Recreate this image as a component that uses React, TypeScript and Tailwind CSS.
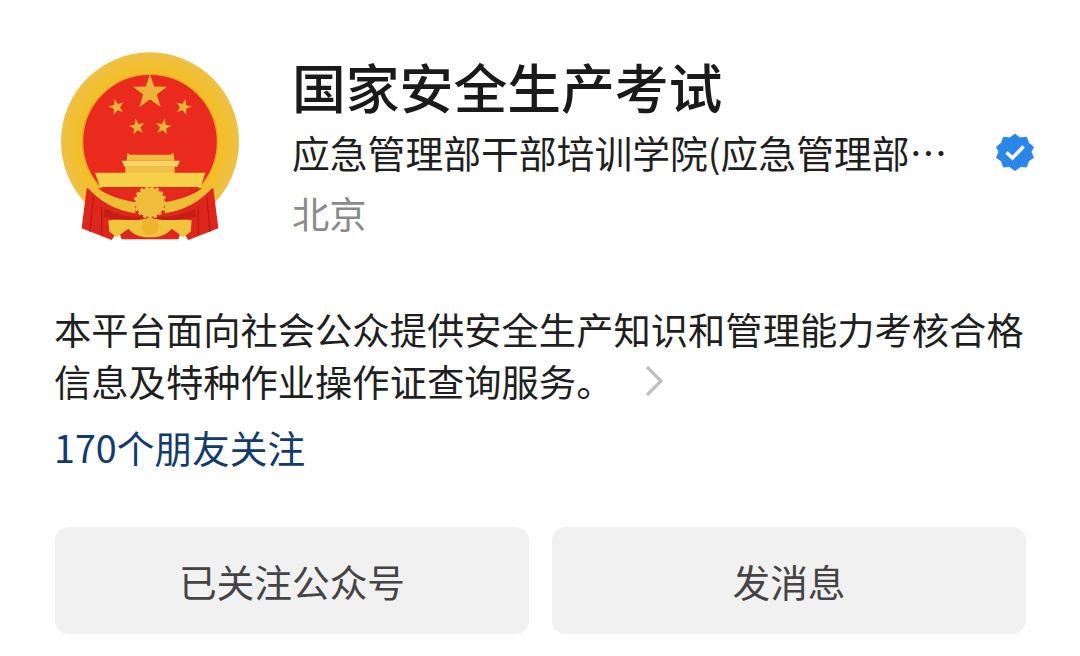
const star = (cx: number, cy: number, R: number, rot = 0) => {
  const pts: string[] = [];
  for (let i = 0; i < 10; i++) {
    const r = i % 2 === 0 ? R : R * 0.4;
    const a = ((-90 + i * 36 + rot) * Math.PI) / 180;
    pts.push(`${(cx + r * Math.cos(a)).toFixed(1)},${(cy + r * Math.sin(a)).toFixed(1)}`);
  }
  return pts.join(" ");
};

function Emblem() {
  return (
    <svg width="190" height="200" viewBox="45 24 570 600" className="shrink-0">
      <defs>
        <filter id="soft"><feGaussianBlur stdDeviation="2.2" /></filter>
        <radialGradient id="ring" cx="50%" cy="50%" r="50%">
          <stop offset="80%" stopColor="#f3bf28" />
          <stop offset="100%" stopColor="#eec046" />
        </radialGradient>
      </defs>
      <g filter="url(#soft)">
        <ellipse cx="330" cy="305" rx="267" ry="268" fill="url(#ring)" />
        <circle cx="330" cy="305" r="202" fill="#ea2c1c" stroke="#dca02e" strokeWidth="4" />
        <polygon points={star(330, 157, 54)} fill="#eeb23a" />
        <polygon points={star(230, 201, 25, -15)} fill="#eeb23a" />
        <polygon points={star(430, 201, 25, 15)} fill="#eeb23a" />
        <polygon points={star(291, 261, 25, -10)} fill="#eeb23a" />
        <polygon points={star(370, 261, 25, 10)} fill="#eeb23a" />
        <path d="M262 338 L270 344 H392 L400 338 L404 362 H260 Z" fill="#f0bc40" />
        <path d="M245 362 H420 L412 380 H253 Z" fill="#f6d466" />
        <path d="M256 380 H404 V400 H256 Z" fill="#f0c244" />
        <path d="M165 398 H496 L482 441 H180 Z" fill="#f6d048" />
        <path d="M140 445 L125 565 L215 600 L235 570 L245 598 L415 598 L425 570 L445 600 L535 565 L520 445 Z" fill="#de261a" />
        <path d="M160 470 L150 575 M185 500 L185 585 M500 470 L510 575 M475 500 L475 585" stroke="#b91c12" strokeWidth="4" fill="none" />
        <path d="M195 505 C240 530 285 535 330 525 C375 535 420 530 465 505 L470 530 C420 545 370 540 330 540 C290 540 240 545 190 530 Z" fill="#c81e14" />
        <path d="M198 442 H462 L440 462 C420 478 400 485 330 490 C260 485 240 478 220 462 Z" fill="#e42a1b" />
        <path d="M136 436 C180 488 230 512 286 520 L286 487 C240 478 195 465 166 438 Z" fill="#eebc36" />
        <path d="M524 436 C480 488 430 512 374 520 L374 487 C420 478 465 465 494 438 Z" fill="#eebc36" />
        <circle cx="330" cy="487" r="44" fill="#efbd3a" stroke="#efbd3a" strokeWidth="10" strokeDasharray="9 7" />
        <path d="M300 510 H360 L350 525 H310 Z" fill="#efbd3a" />
        <path d="M205 541 C250 535 290 548 330 532 C370 548 410 535 455 541 L452 575 L430 592 L395 566 C375 590 350 592 330 592 C310 592 285 590 265 566 L230 592 L208 575 Z" fill="#f2c43e" />
        <circle cx="330" cy="560" r="26" fill="#eeb42e" />
      </g>
    </svg>
  );
}

function Badge() {
  return (
    <svg width="38" height="38" viewBox="0 0 38 38" className="shrink-0">
      <path
        d="M19 1 L24 5 L30.5 4.2 L32.5 10 L37.5 14 L35 19 L37.5 24.5 L32.5 28 L30.5 34 L24.5 33.5 L19 37.5 L13.5 33.5 L7.5 34 L5.5 28 L0.5 24.5 L3 19 L0.5 14 L5.5 10 L7.5 4.2 L14 5 Z"
        fill="#2a86e8"
        stroke="#2a86e8"
        strokeLinejoin="round"
        strokeWidth="1"
      />
      <path d="M10.5 19.5 L16.5 25 L27.5 13.5" fill="none" stroke="#ffffff" strokeWidth="3.6" />
    </svg>
  );
}

export default function App() {
  return (
    <div
      className="w-[1080px] h-[656px] overflow-hidden bg-white px-[55px] text-[37.3px] leading-[52px] text-[#1f1f1f]"
      style={{ fontFamily: '"Noto Sans CJK SC", "Noto Sans", sans-serif' }}
    >
      <div className="flex pt-[48px]">
        <Emblem />
        <div className="ml-[47px] flex-1 min-w-0">
          <div className="text-[53.8px] leading-[76px] font-medium text-[#1a1a1a]">国家安全生产考试</div>
          <div className="flex items-center mt-[2px] h-[52px]">
            <span className="w-[704px] shrink-0 whitespace-nowrap text-[37.8px]">应急管理部干部培训学院(应急管理部⋯</span>
            <Badge />
          </div>
          <div className="mt-[9px] text-[#8a8a8a]">北京</div>
        </div>
      </div>
      <div className="mt-[55px] -ml-[1px] w-[985px]">
        本平台面向社会公众提供安全生产知识和管理能力考核合格
        <div className="flex items-center">
          信息及特种作业操作证查询服务。
          <svg width="22" height="34" viewBox="0 0 22 34" className="ml-[31px]">
            <path d="M3 3 L17 17 L3 31" fill="none" stroke="#c0c0c0" strokeWidth="3.2" />
          </svg>
        </div>
      </div>
      <div className="mt-[14px] -ml-[1px] text-[37.7px] text-[#123a6a]">170个朋友关注</div>
      <div className="mt-[54px] flex gap-[23px] w-[971px] text-[37.7px]">
        <div className="flex-1 h-[107px] rounded-[14px] bg-[#f1f1f1] flex items-center justify-center text-[#444444]">
          已关注公众号
        </div>
        <div className="flex-1 h-[107px] rounded-[14px] bg-[#f1f1f1] flex items-center justify-center text-[#444444]">
          发消息
        </div>
      </div>
    </div>
  );
}
